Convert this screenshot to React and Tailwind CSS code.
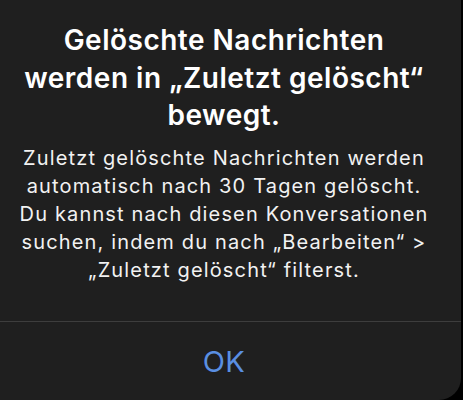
export default function App() {
  return (
    <div className="w-[463px] h-[400px] bg-black overflow-hidden" style={{ fontFamily: 'Inter, "Liberation Sans", sans-serif' }}>
      <div className="w-[474px] -ml-[13px] h-[400px] bg-[#1f1f1f] rounded-br-[22px] flex flex-col">
        <div className="pt-[22px] text-center text-white">
          <h1 className="text-[28px] leading-[37.5px] font-semibold tracking-[0.5px]">
            Gelöschte Nachrichten<br />werden in „Zuletzt gelöscht“<br />bewegt.
          </h1>
          <p className="mt-[9px] text-[20px] leading-[28px] tracking-[1.15px] text-[#f2f2f2]">
            Zuletzt gelöschte Nachrichten werden<br />automatisch nach 30 Tagen gelöscht.<br />Du kannst nach diesen Konversationen<br />suchen, indem du nach „Bearbeiten“ &gt;<br />„Zuletzt gelöscht“ filterst.
          </p>
        </div>
        <div className="mt-auto border-t border-[#3d3d3d] h-[79px] flex items-center justify-center">
          <span className="text-[29px] tracking-[0.5px] text-[#5a8fe2] leading-none">OK</span>
        </div>
      </div>
    </div>
  );
}
